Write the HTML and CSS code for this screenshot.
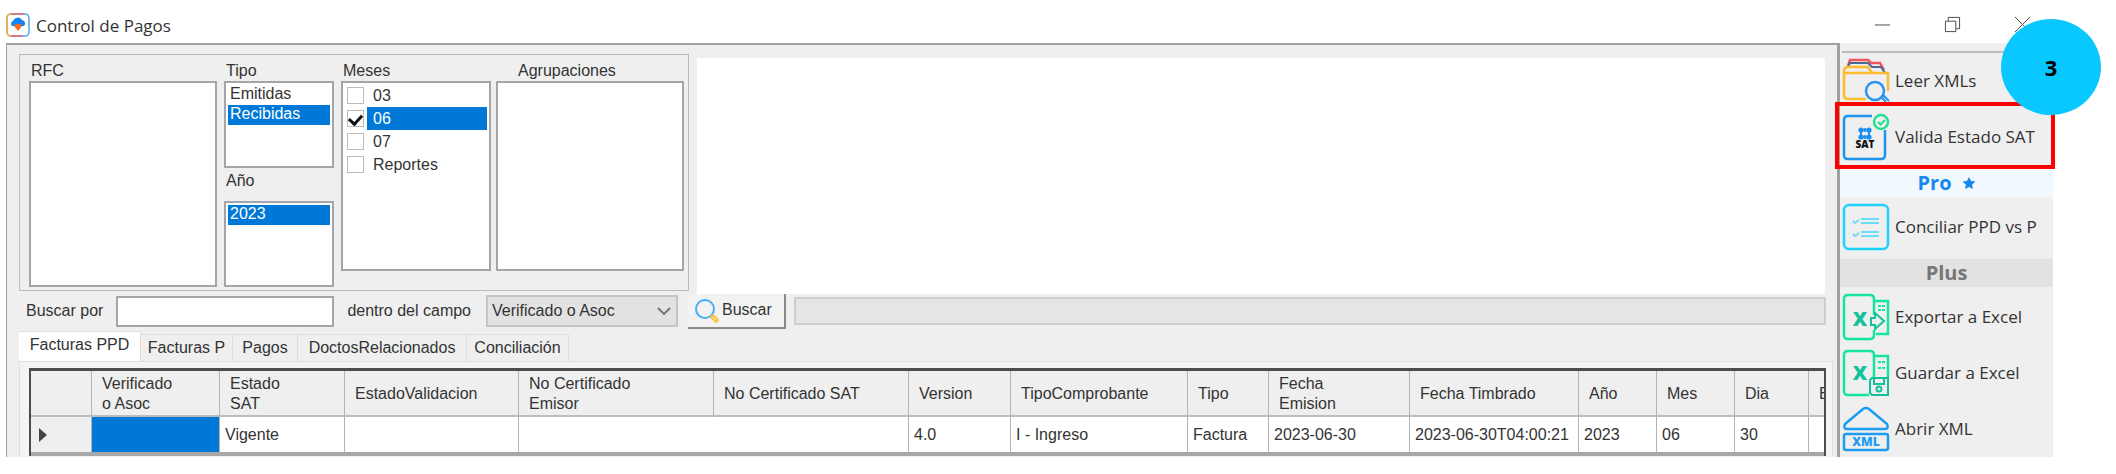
FILE: index.html
```html
<!doctype html>
<html lang="es">
<head>
    <meta charset="utf-8" />
    <title>Control de Pagos</title>
    <link rel="stylesheet" href="styles.css">
</head>
<body>
<div class="window">
    <header class="titlebar">
        <svg class="titlebar__logo" viewBox="0 0 24 24">
            <rect x="1" y="1" width="22" height="22" rx="4" fill="#fff" stroke="#5aa9e6" stroke-width="1.6"/>
            <path d="M5 23 Q1 23 1 19 V5 Q1 1 5 1" fill="none" stroke="#fbb03b" stroke-width="1.6"/>
            <path d="M5 1 H18 M5 23 H17" stroke="#f0676b" stroke-width="1.6"/>
            <path d="M6 13 a3 3 0 0 1 1-5 a5 5 0 0 1 9-1 a3.500 3.500 0 0 1 2 6 z" fill="#1485f5"/>
            <path d="M9 11 h6 v2 h1 l-4 5 l-4-5 h1 z" fill="#f26b1d"/>
        </svg>
        <h1 class="titlebar__title">Control de Pagos</h1>
        <div class="titlebar__buttons">
            <button aria-label="Minimizar"><svg viewBox="0 0 18 18"><path d="M1 9.500 H17"/></svg></button>
            <button aria-label="Restaurar"><svg viewBox="0 0 18 18"><path d="M1.500 5.500 H12.500 V16.500 H1.500 Z M4.500 5 V1.500 H16.500 V13.500 H13"/></svg></button>
            <button aria-label="Cerrar"><svg viewBox="0 0 18 18"><path d="M1 1 L17 17 M17 1 L1 17"/></svg></button>
        </div>
    </header>

    <div class="content">
        <main class="main">
            <section class="filters">
                <div class="group">
                    <div class="field field--rfc">
                        <label for="rfc">RFC</label>
                        <select id="rfc" class="list" size="2"></select>
                    </div>
                    <div class="field field--tipo">
                        <label for="tipo">Tipo</label>
                        <select id="tipo" class="list" size="4">
                            <option>Emitidas</option>
                            <option selected>Recibidas</option>
                        </select>
                        <label for="anio" class="label--anio">Año</label>
                        <select id="anio" class="list" size="4">
                            <option selected>2023</option>
                        </select>
                    </div>
                    <fieldset class="field field--meses">
                        <legend>Meses</legend>
                        <div class="list checks">
                            <label><input type="checkbox"><span>03</span></label>
                            <label><input type="checkbox" checked><span>06</span></label>
                            <label><input type="checkbox"><span>07</span></label>
                            <label><input type="checkbox"><span>Reportes</span></label>
                        </div>
                    </fieldset>
                    <div class="field field--agrupaciones">
                        <label for="agrupaciones">Agrupaciones</label>
                        <select id="agrupaciones" class="list" size="2"></select>
                    </div>
                </div>
                <div class="detail"></div>
            </section>

            <form class="search" onsubmit="return false">
                <label for="buscar">Buscar por</label>
                <input id="buscar" class="search__text" type="text">
                <label for="campo">dentro del campo</label>
                <div class="combo">
                    <select id="campo">
                        <option>Verificado o Asoc</option>
                    </select>
                    <svg viewBox="0 0 14 8"><path d="M1 1 L7 7 L13 1"/></svg>
                </div>
                <button class="search__button">
                    <svg viewBox="0 0 26 26">
                        <circle cx="11" cy="12" r="9" fill="none" stroke="#45aef5" stroke-width="2"/>
                        <path d="M19 20 L22 23" stroke="#fbbf3a" stroke-width="5" stroke-linecap="round"/>
                        <path d="M19 20 L22 23" stroke="#fde3a0" stroke-width="1.500"/>
                    </svg>
                    Buscar
                </button>
                <div class="progress"></div>
            </form>

            <nav class="tabs">
                <button class="tab is-active">Facturas PPD</button>
                <button class="tab tab--facturas">Facturas P</button>
                <button class="tab tab--pagos">Pagos</button>
                <button class="tab tab--doctos">DoctosRelacionados</button>
                <button class="tab tab--conciliacion">Conciliación</button>
            </nav>
            <div class="page">
                <div class="grid">
                    <table>
                        <colgroup>
                            <col class="w-61"><col class="w-128"><col class="w-125"><col class="w-174"><col class="w-195">
                            <col class="w-195"><col class="w-102"><col class="w-177"><col class="w-81"><col class="w-141">
                            <col class="w-169"><col class="w-78"><col class="w-78"><col class="w-74"><col>
                        </colgroup>
                        <thead>
                            <tr>
                                <th></th>
                                <th>Verificado<br>o Asoc</th>
                                <th>Estado<br>SAT</th>
                                <th>EstadoValidacion</th>
                                <th>No Certificado<br>Emisor</th>
                                <th>No Certificado SAT</th>
                                <th>Version</th>
                                <th>TipoComprobante</th>
                                <th>Tipo</th>
                                <th>Fecha<br>Emision</th>
                                <th>Fecha Timbrado</th>
                                <th>Año</th>
                                <th>Mes</th>
                                <th>Dia</th>
                                <th>E</th>
                            </tr>
                        </thead>
                        <tbody>
                            <tr>
                                <td class="row-head"><svg viewBox="0 0 8 14"><path d="M0 0 L8 7 L0 14 Z"/></svg></td>
                                <td class="is-selected"></td>
                                <td>Vigente</td>
                                <td></td>
                                <td class="no-line"></td>
                                <td></td>
                                <td>4.0</td>
                                <td>I - Ingreso</td>
                                <td>Factura</td>
                                <td>2023-06-30</td>
                                <td>2023-06-30T04:00:21</td>
                                <td>2023</td>
                                <td>06</td>
                                <td>30</td>
                                <td></td>
                            </tr>
                        </tbody>
                    </table>
                </div>
            </div>
        </main>

        <aside class="sidebar">
            <button class="action">
                <svg viewBox="0 0 46 46" fill="none" stroke-width="2">
                    <path d="M5 8 L7 2 H25 L28 5 H37 L41 12" stroke="#f2545b" stroke-width="2.500"/>
                    <path d="M5 9 L7 5 H25 L29 9 H38 L42 15" stroke="#4a6796"/>
                    <path d="M23 41 H5 Q1 41 1 37 V13 Q1 9 5 9 H25 L29 15 H45 V33 M1 15 H29" stroke="#fdbc2c" stroke-width="2.500"/>
                    <circle cx="32" cy="33" r="9" stroke="#2b93ee" stroke-width="2.500"/>
                    <path d="M38 39 L41 38 L46 43 M38 39 L43 44" stroke="#2b93ee"/>
                </svg>
                Leer XMLs
            </button>
            <button class="action action--marked">
                <svg viewBox="0 0 46 46" fill="none" stroke-width="2">
                    <path d="M29 2 H5 Q1 2 1 6 V41 Q1 45 5 45 H38 Q42 45 42 41 V16" stroke="#1c94ee" stroke-width="2.500"/>
                    <g fill="#1c8fee">
                        <circle cx="18" cy="16" r="2.600"/><circle cx="22" cy="16" r="2"/><circle cx="26" cy="16" r="2.600"/>
                        <circle cx="18" cy="23" r="2.600"/><circle cx="22" cy="23" r="2"/><circle cx="26" cy="23" r="2.600"/>
                    </g>
                    <path d="M18 16 V23 M26 16 V23" stroke="#1c8fee"/>
                    <text x="22" y="34" class="icon-sat">SAT</text>
                    <circle cx="38" cy="8" r="7" fill="#f0f0f0" stroke="#22e08e" stroke-width="2.500"/>
                    <path d="M35 8 L37.500 10.500 L42 6" stroke="#22e08e"/>
                </svg>
                Valida Estado SAT
            </button>
            <h2 class="band band--pro">Pro
                <svg viewBox="0 0 14 14"><path d="M7 1 L9 5 L13.500 5.500 L10 8.700 L11 13 L7 11 L3 13 L4 8.700 L0.500 5.500 L5 5 Z"/></svg>
            </h2>
            <button class="action">
                <svg viewBox="0 0 46 46" fill="none" stroke="#1cd3fb" stroke-width="2.500">
                    <rect x="1" y="1" width="44" height="44" rx="5"/>
                    <g stroke="#6cdcfc" stroke-width="2">
                        <path d="M18 15 H36 M18 19 H36 M18 28 H36 M18 32 H36"/>
                        <path d="M10 17 L12 19 L16 16 M10 30 L12 32 L16 29"/>
                    </g>
                </svg>
                Conciliar PPD vs P
            </button>
            <h2 class="band band--plus">Plus</h2>
            <button class="action">
                <svg viewBox="0 0 46 46" fill="none" stroke="#12e79c" stroke-width="2.500">
                    <path d="M31 21 V5 Q31 1 27 1 H5 Q1 1 1 5 V41 Q1 45 5 45 H27 Q31 45 31 41 V36"/>
                    <path d="M31 7 H45 V40 H33"/>
                    <path d="M35 12 H42 M35 16 H42" stroke-width="2" stroke-dasharray="3 1"/>
                    <text x="17" y="32" class="icon-x">X</text>
                    <path d="M28 24 H32 V19 L41 27 L32 35 V31 H28 Z" fill="#efefef" stroke="#14c29a" stroke-width="2"/>
                </svg>
                Exportar a Excel
            </button>
            <button class="action">
                <svg viewBox="0 0 46 46" fill="none" stroke="#12e79c" stroke-width="2.500">
                    <path d="M26 45 H5 Q1 45 1 41 V5 Q1 1 5 1 H27 Q31 1 31 5 V27"/>
                    <path d="M31 6 H45 V28"/>
                    <path d="M35 12 H42 M35 18 H42" stroke-width="2" stroke-dasharray="3 1"/>
                    <text x="17" y="30" class="icon-x">X</text>
                    <path d="M29 28 H45 V45 H29 L27 43 V30 Z M31 28 V34 H41 V28" stroke="#14c29a" stroke-width="2"/>
                    <circle cx="36" cy="39" r="2.500" stroke="#14c29a" stroke-width="2"/>
                </svg>
                Guardar a Excel
            </button>
            <button class="action">
                <svg viewBox="0 0 46 46" fill="none" stroke="#1c9df2" stroke-width="2.500">
                    <path d="M2 18 L20 3 Q23 1 26 3 L44 18 Q46 23 42 23 H4 Q0 23 2 18 Z"/>
                    <rect x="1" y="28" width="44" height="16" rx="2"/>
                    <text x="23" y="40" class="icon-xml">XML</text>
                </svg>
                Abrir XML
            </button>
        </aside>
    </div>
    <div class="step">3</div>
</div>
</body>
</html>
```
FILE: styles.css
```css
* {
    box-sizing: border-box;
}
body {
    margin: 0;
    padding: 0 63px 16px 6px;
    background-color: #fff;
    color: #333;
    font-family: "Liberation Sans", Arial, sans-serif;
    font-size: 16px;
    line-height: 20px;
}
button, input, select {
    font: inherit;
    color: inherit;
    margin: 0;
}
button {
    border: 0;
    padding: 0;
    background: none;
}
.window {
    position: relative;
}

/* title bar */
.titlebar {
    display: flex;
    align-items: center;
    height: 43px;
    padding-top: 6px;
}
.titlebar__logo {
    width: 24px;
    height: 24px;
}
.titlebar__title {
    flex: 1;
    margin: 2px 0 0 6px;
    font-family: "Open Sans", sans-serif;
    font-size: 17px;
    font-weight: 400;
}
.titlebar__buttons {
    display: flex;
    gap: 53px;
    padding-right: 22px;
}
.titlebar__buttons svg {
    display: block;
    width: 17px;
    height: 17px;
    fill: none;
    stroke: #444;
}

.content {
    display: flex;
    background-color: #efefef;
}
.main {
    flex: 1;
    min-width: 0;
    padding: 9px 4px 0 12px;
    border: solid #a0a09c;
    border-width: 2px 3px 0 1px;
}

/* filters */
.filters {
    display: flex;
    gap: 8px;
    padding-right: 8px;
}
.group {
    display: flex;
    width: 670px;
    height: 237px;
    padding: 5px 4px 3px 9px;
    border: 1px solid #bbb;
}
.detail {
    flex: 1;
    margin: 4px 0 -3px;
    background-color: #fff;
}
.field {
    display: flex;
    flex-direction: column;
    min-width: 0;
    margin: 0;
    padding: 0;
    border: 0;
}
.field > label,
.field > legend {
    height: 21px;
    padding: 1px 2px 0;
}
.field--rfc {
    width: 188px;
    margin-right: 7px;
}
.field--tipo {
    width: 110px;
    margin-right: 7px;
}
.field--meses {
    width: 150px;
    margin-right: 5px;
    padding-bottom: 16px;
}
.field--agrupaciones {
    width: 188px;
    padding-bottom: 16px;
}
.field--agrupaciones > label {
    padding-left: 22px;
}
.field > .label--anio {
    height: 33px;
    padding-top: 3px;
}
.list {
    flex: 1;
    width: 100%;
    min-height: 0;
    padding: 2px;
    border: 2px solid #a3a5ab;
    border-radius: 0;
    background-color: #fff;
    overflow: hidden;
    outline: none;
}
.list option {
    height: 20px;
    min-height: 20px;
    padding: 0 2px;
    line-height: 20px;
}
.list option:checked {
    background: #0078d7 linear-gradient(#0078d7, #0078d7);
    color: #fff;
}
.checks {
    height: 189px;
    padding-top: 1px;
}
.checks label {
    display: flex;
    align-items: center;
    height: 23px;
    padding-left: 2px;
}
.checks input {
    display: grid;
    place-items: center;
    width: 17px;
    height: 17px;
    margin-right: 3px;
    border: 1px solid #bbb;
    background-color: #fff;
    appearance: none;
}
.checks input:checked::before {
    content: "";
    width: 10px;
    height: 6px;
    border: solid #111;
    border-width: 0 0 3px 3px;
    transform: rotate(-48deg);
}
.checks span {
    flex: 1;
    padding-left: 6px;
    line-height: 23px;
}
.checks input:checked + span {
    background-color: #0078d7;
    color: #fff;
}

/* search row */
.search {
    display: flex;
    align-items: center;
    height: 40px;
    padding: 0 7px;
}
.search__text {
    width: 218px;
    height: 31px;
    margin: 0 13px;
    border: 2px solid #a5a5a5;
    background-color: #fff;
}
.combo {
    display: grid;
    align-items: center;
    width: 192px;
    height: 32px;
    margin: 0 10px 0 15px;
}
.combo select {
    grid-area: 1 / 1;
    height: 32px;
    padding: 0 4px;
    border: 2px solid #c4c4c4;
    border-radius: 0;
    background-color: #e2e2e2;
    appearance: none;
}
.combo svg {
    grid-area: 1 / 1;
    justify-self: end;
    width: 14px;
    height: 8px;
    margin-right: 7px;
    fill: none;
    stroke: #777;
    stroke-width: 2;
    pointer-events: none;
}
.search__button {
    display: flex;
    align-items: center;
    gap: 2px;
    width: 98px;
    height: 35px;
    padding-left: 6px;
    border: solid #8a8a8a;
    border-width: 0 2px 2px 0;
    background-color: #f2f2f2;
}
.search__button svg {
    width: 26px;
    height: 26px;
}
.progress {
    flex: 1;
    height: 28px;
    margin-left: 8px;
    border: 2px solid #cecece;
    background-color: #e5e5e5;
}

/* tabs */
.tabs {
    display: flex;
    align-items: flex-end;
    height: 30px;
}
.tab {
    height: 27px;
    border: 1px solid #dfdfdf;
    border-width: 1px 1px 0 0;
}
.tab.is-active {
    width: 122px;
    height: 30px;
    padding-bottom: 4px;
    background-color: #fff;
}
.tab--facturas {
    width: 92px;
}
.tab--pagos {
    width: 65px;
}
.tab--doctos {
    width: 169px;
}
.tab--conciliacion {
    width: 102px;
}
.page {
    padding: 6px 6px 0 9px;
    border: 1px solid #dfdfdf;
    border-bottom: 0;
    background-color: #f4f4f4;
}
.grid {
    padding-bottom: 4px;
    border: solid #4d4d4d;
    border-width: 3px 2px 0 2px;
    background-color: #a8a8a8;
    overflow: hidden;
}
.grid table {
    width: 100%;
    table-layout: fixed;
    border-collapse: separate;
    border-spacing: 0;
}
.w-61 { width: 61px; }
.w-128 { width: 128px; }
.w-125 { width: 125px; }
.w-174 { width: 174px; }
.w-195 { width: 195px; }
.w-102 { width: 102px; }
.w-177 { width: 177px; }
.w-81 { width: 81px; }
.w-141 { width: 141px; }
.w-169 { width: 169px; }
.w-78 { width: 78px; }
.w-74 { width: 74px; }
.grid th,
.grid td {
    border-right: 1px solid #b4b4b4;
    text-align: left;
    white-space: nowrap;
    overflow: hidden;
}
.grid th {
    height: 46px;
    padding: 2px 0 0 10px;
    border-bottom: 2px solid #bdbdbd;
    background-color: #efefef;
    font-weight: 400;
}
.grid td {
    height: 35px;
    padding: 0 0 0 5px;
    background-color: #fff;
}
.grid tr > :last-child {
    border-right: 0;
}
.grid .row-head {
    padding-left: 8px;
    background-color: #efefef;
}
.row-head svg {
    display: block;
    width: 8px;
    height: 14px;
    fill: #444;
}
.grid .is-selected {
    background-color: #0078d7;
}
.grid .no-line {
    border-right-color: #fff;
}

/* right side actions */
.sidebar {
    display: flex;
    flex-direction: column;
    width: 213px;
}
.sidebar::before {
    content: "";
    height: 8px;
    margin-left: 2px;
    border-bottom: 2px solid #bbb;
}
.action {
    position: relative;
    display: flex;
    align-items: center;
    gap: 6px;
    height: 56px;
    padding-left: 3px;
    font-family: "Open Sans", sans-serif;
    font-size: 17px;
    white-space: nowrap;
}
.action svg {
    flex: none;
    width: 46px;
    height: 46px;
    overflow: visible;
}
.action--marked::after {
    content: "";
    position: absolute;
    inset: -7px -2px -4px -5px;
    border: 4px solid #f00;
}
.band {
    display: flex;
    align-items: center;
    justify-content: center;
    gap: 10px;
    height: 28px;
    margin: 4px 0 2px;
    font-family: "Open Sans", sans-serif;
    font-size: 20px;
    font-weight: 700;
}
.band svg {
    width: 14px;
    height: 14px;
    fill: #1488ee;
}
.band--pro {
    background-color: #f1f9ff;
    color: #1488ee;
}
.band--plus {
    background-color: #e2e2e2;
    color: #777;
}
.icon-sat,
.icon-x,
.icon-xml {
    font-family: "Open Sans", sans-serif;
    font-weight: 800;
    text-anchor: middle;
    stroke: none;
}
.icon-sat {
    font-size: 10px;
    fill: #111;
}
.icon-x {
    font-size: 20px;
    fill: #14c29a;
}
.icon-xml {
    font-size: 12px;
    fill: #1c9df2;
}

.step {
    position: absolute;
    top: 19px;
    right: -48px;
    display: flex;
    align-items: center;
    justify-content: center;
    width: 100px;
    height: 96px;
    border-radius: 50%;
    background-color: #08c8ff;
    color: #000;
    font-family: "Open Sans", sans-serif;
    font-size: 22px;
    font-weight: 700;
}
```
